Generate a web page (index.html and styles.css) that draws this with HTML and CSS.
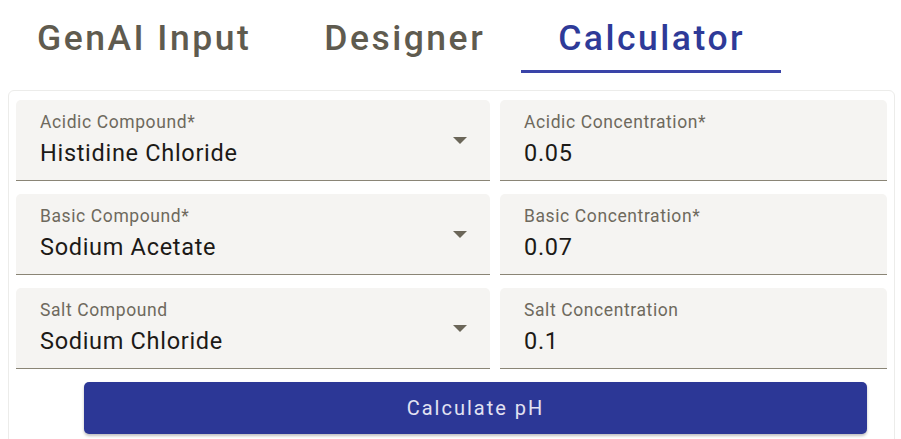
FILE: index.html
```html
<!DOCTYPE html>
<html>
<head>
<meta charset="utf-8">
<link rel="stylesheet" href="styles.css">
</head>
<body>
<div class="tabs">
  <div class="tab">GenAI Input</div>
  <div class="tab">Designer</div>
  <div class="tab active">Calculator</div>
</div>
<div class="card">
  <div class="grid">
    <div class="field select">
      <div class="label">Acidic Compound*</div>
      <div class="value">Histidine Chloride</div>
      <span class="arrow"></span>
    </div>
    <div class="field">
      <div class="label">Acidic Concentration*</div>
      <div class="value">0.05</div>
    </div>
    <div class="field select">
      <div class="label">Basic Compound*</div>
      <div class="value">Sodium Acetate</div>
      <span class="arrow"></span>
    </div>
    <div class="field">
      <div class="label">Basic Concentration*</div>
      <div class="value">0.07</div>
    </div>
    <div class="field select">
      <div class="label">Salt Compound</div>
      <div class="value">Sodium Chloride</div>
      <span class="arrow"></span>
    </div>
    <div class="field">
      <div class="label">Salt Concentration</div>
      <div class="value">0.1</div>
    </div>
  </div>
  <button class="btn">Calculate pH</button>
</div>
</body>
</html>
```
FILE: styles.css
```css
html, body {
  margin: 0;
  padding: 0;
  background: #ffffff;
  font-family: Roboto, "Liberation Sans", sans-serif;
  overflow: hidden;
}
.tabs {
  display: flex;
  margin-bottom: 17px;
}
.tab {
  padding: 18px 36px 12px 37px;
  font-size: 35.5px;
  line-height: 40px;
  font-weight: 500;
  letter-spacing: 2.5px;
  color: #5f5b4f;
  border-bottom: 3px solid transparent;
}
.tab.active {
  color: #2e3a98;
  border-bottom-color: #3a44a8;
}
.card {
  margin: 0 6px 0 8px;
  border: 1px solid #ececea;
  border-radius: 6px;
  padding: 9px 7px 20px;
}
.grid {
  display: grid;
  grid-template-columns: 474px 387px;
  column-gap: 10px;
  row-gap: 13px;
}
.field {
  position: relative;
  height: 81px;
  box-sizing: border-box;
  background: #f5f4f2;
  border-radius: 5px 5px 0 0;
  border-bottom: 1.5px solid #8a8576;
  padding: 12px 0 0 24px;
}
.label {
  font-size: 17.5px;
  line-height: 20px;
  color: #6e695d;
  letter-spacing: 0.6px;
}
.value {
  margin-top: 7px;
  font-size: 23.5px;
  line-height: 28px;
  color: #1c1a17;
  letter-spacing: 0.7px;
}
.arrow {
  position: absolute;
  top: 37px;
  right: 23px;
  width: 0;
  height: 0;
  border-left: 7px solid transparent;
  border-right: 7px solid transparent;
  border-top: 7px solid #6b6659;
}
.btn {
  display: block;
  margin: 13px 0 0 68px;
  width: 783px;
  height: 52px;
  border: none;
  border-radius: 5px;
  background: #2c3796;
  color: #e2e2f2;
  font-family: Roboto, "Liberation Sans", sans-serif;
  font-size: 20px;
  font-weight: 400;
  letter-spacing: 2px;
  box-shadow: 0 2px 3px rgba(0,0,0,0.25);
}
```
